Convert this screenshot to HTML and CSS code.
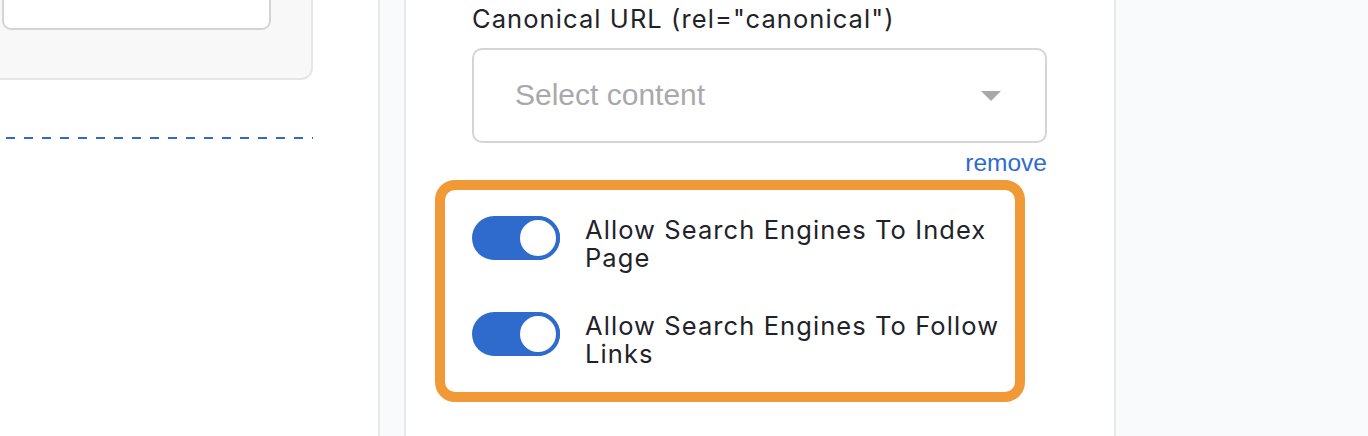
FILE: index.html
```html
<!DOCTYPE html>
<html lang="en">
<head>
<meta charset="utf-8">
<title>SEO settings</title>
<link rel="stylesheet" href="styles.css">
</head>
<body>
<div class="layout">
  <div class="left">
    <div class="card">
      <div class="card-input"></div>
    </div>
    <div class="dashed"></div>
  </div>
  <div class="panel">
    <div class="field-label">Canonical URL (rel="canonical")</div>
    <div class="select">
      <span class="placeholder">Select content</span>
      <span class="caret"></span>
    </div>
    <div class="remove-row"><a class="remove" href="#">remove</a></div>
    <div class="highlight">
      <div class="toggle-row">
        <span class="toggle"><span class="knob"></span></span>
        <span class="toggle-text">Allow Search Engines To Index Page</span>
      </div>
      <div class="toggle-row">
        <span class="toggle"><span class="knob"></span></span>
        <span class="toggle-text">Allow Search Engines To Follow Links</span>
      </div>
    </div>
  </div>
</div>
</body>
</html>
```

FILE: styles.css
```css
html, body {
  margin: 0;
  padding: 0;
}
body {
  font-family: Inter, "Noto Sans", sans-serif;
  color: #1f2329;
  background: #f9fafb;
  height: 436px;
  overflow: hidden;
}
.layout {
  display: flex;
  align-items: stretch;
  height: 436px;
}
.left {
  width: 380px;
  flex: none;
  box-sizing: border-box;
  background: #ffffff;
  border-right: 2px solid #e7e8eb;
  overflow: hidden;
}
.card {
  box-sizing: border-box;
  width: 333px;
  margin: -40px 0 0 -20px;
  padding: 8px 40px 48px 20px;
  background: #f8f8f8;
  border: 2px solid #e6e6e6;
  border-radius: 12px;
}
.card-input {
  height: 60px;
  box-sizing: border-box;
  background: #ffffff;
  border: 2px solid #d4d4d4;
  border-radius: 9px;
}
.dashed {
  width: 313px;
  height: 2px;
  margin-top: 57px;
  background: repeating-linear-gradient(to right, transparent 0 6px, #2f6bcc 6px 15px, transparent 15px 18px);
}
.panel {
  width: 712px;
  flex: none;
  box-sizing: border-box;
  margin-left: 24px;
  background: #ffffff;
  border-left: 2px solid #e7e8eb;
  border-right: 2px solid #e7e8eb;
  padding: 5px 67px 0 66px;
}
.field-label {
  font-size: 25.5px;
  letter-spacing: 1.08px;
  line-height: 28px;
  color: #1f2329;
}
.select {
  margin-top: 15px;
  height: 95px;
  box-sizing: border-box;
  border: 2px solid #d5d5d7;
  border-radius: 10px;
  display: flex;
  align-items: center;
  justify-content: space-between;
  padding: 0 44px 2px 41px;
}
.placeholder {
  font-family: "Liberation Sans", Arial, sans-serif;
  font-size: 30px;
  color: #a9a9ab;
}
.caret {
  width: 0;
  height: 0;
  border-left: 10px solid transparent;
  border-right: 10px solid transparent;
  border-top: 10px solid #a9a9ab;
  margin-top: 2px;
}
.remove-row {
  margin-top: 6px;
  text-align: right;
  font-family: "Liberation Sans", Arial, sans-serif;
  font-size: 24.5px;
  line-height: 28px;
}
.remove {
  color: #2f6bcc;
  text-decoration: none;
}
.highlight {
  box-sizing: border-box;
  width: 590px;
  margin: 3px 0 0 -37px;
  border: 10px solid #f19937;
  border-radius: 20px;
  background: #ffffff;
  padding: 26px 12px 24px 27px;
  display: flex;
  flex-direction: column;
  gap: 40px;
}
.toggle-row {
  display: flex;
  align-items: flex-start;
  gap: 25px;
}
.toggle {
  flex: none;
  width: 88px;
  height: 44px;
  border-radius: 22px;
  background: #2f6bcc;
  display: flex;
  justify-content: flex-end;
}
.knob {
  width: 44px;
  height: 44px;
  box-sizing: border-box;
  border: 4px solid #2f6bcc;
  border-radius: 50%;
  background: #ffffff;
}
.toggle-text {
  flex: 1;
  font-size: 25.5px;
  letter-spacing: 1.08px;
  line-height: 28px;
  color: #1f2329;
}
```
